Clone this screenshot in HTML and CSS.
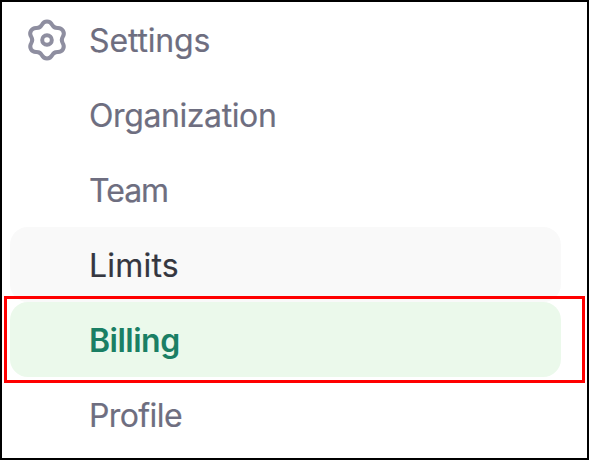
FILE: index.html
```html
<!DOCTYPE html>
<html lang="en">
<head>
<meta charset="utf-8">
<title>Settings</title>
<link rel="stylesheet" href="styles.css">
</head>
<body>
<nav class="sidebar">
  <div class="item heading">
    <svg class="gear" viewBox="-22 -22 44 44" aria-hidden="true">
      <defs><path id="lobe" d="M-7.4-12.8C-6.2-13.5-5.7-14.3-5.1-15.3C-4.1-17.2-2.5-18.5 0-18.5S4.1-17.2 5.1-15.3C5.7-14.3 6.2-13.5 7.4-12.8"/></defs>
      <use href="#lobe"/>
      <use href="#lobe" transform="rotate(60)"/>
      <use href="#lobe" transform="rotate(120)"/>
      <use href="#lobe" transform="rotate(180)"/>
      <use href="#lobe" transform="rotate(240)"/>
      <use href="#lobe" transform="rotate(300)"/>
      <circle r="4.8"/>
    </svg>
    <span class="label settings">Settings</span>
  </div>
  <a class="item"><span class="label organization">Organization</span></a>
  <a class="item"><span class="label team">Team</span></a>
  <a class="item hovered"><span class="label limits">Limits</span></a>
  <a class="item active"><span class="label billing">Billing</span></a>
  <a class="item"><span class="label profile">Profile</span></a>
  <div class="highlight"></div>
</nav>
</body>
</html>
```
FILE: styles.css
```css
* { box-sizing: border-box; }
body { margin: 0; background: #fff; }
.sidebar {
  position: relative;
  width: 589px;
  height: 460px;
  border: 2px solid #000;
  padding-left: 8px;
  overflow: hidden;
  font-family: Inter, "Liberation Sans", sans-serif;
  font-size: 32px;
  line-height: 40px;
  color: #6e6e80;
}
.item {
  display: flex;
  align-items: center;
  width: 551px;
  height: 75px;
  padding-left: 79px;
  border-radius: 18px;
}
.heading { padding-left: 15px; }
.gear {
  width: 44px;
  height: 44px;
  margin-right: 20px;
  flex: none;
  fill: none;
  stroke: #8e8ea0;
  stroke-width: 4;
  stroke-linecap: round;
}
.label {
  white-space: nowrap;
  padding-top: 2px;
  -webkit-text-stroke: 0.2px currentColor;
}
.settings { letter-spacing: -0.15px; }
.organization { letter-spacing: -0.4px; }
.team { letter-spacing: -1px; }
.limits { letter-spacing: 0.2px; }
.billing { letter-spacing: -0.5px; }
.profile { letter-spacing: -0.6px; }
.hovered { background: #f9f9f9; color: #353740; }
.active { background: #ebf9eb; color: #1a7f64; font-weight: 600; }
.active .label { -webkit-text-stroke: 0; }
.highlight {
  position: absolute;
  left: 2px;
  top: 294px;
  width: 581px;
  height: 87px;
  border: 3px solid #f00;
}
```
